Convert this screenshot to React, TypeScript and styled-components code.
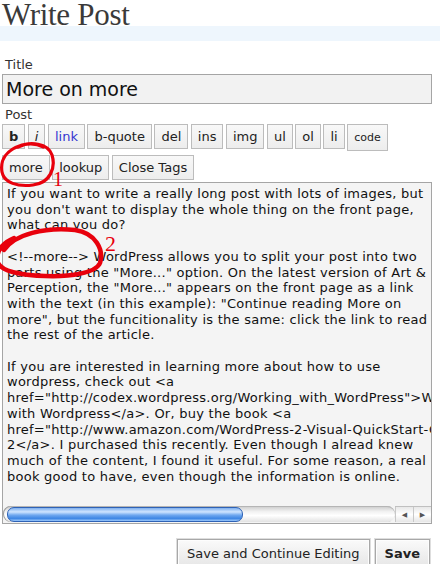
import React from "react";
import styled, { createGlobalStyle } from "styled-components";

const GlobalStyle = createGlobalStyle`
  html, body {
    margin: 0;
    padding: 0;
    background: #fff;
  }
  body {
    font-family: "DejaVu Sans", Verdana, sans-serif;
    color: #222;
  }
`;

const Page = styled.div`
  position: relative;
  width: 440px;
  height: 564px;
  overflow: hidden;
`;

const Header = styled.div`
  height: 41px;
  background: linear-gradient(to bottom, transparent 26px, #eef6fd 26px);
`;

const Heading = styled.h2`
  margin: 0;
  padding-left: 2px;
  font-family: "Liberation Serif", "Times New Roman", serif;
  font-weight: normal;
  font-size: 31px;
  line-height: 30px;
  letter-spacing: -0.3px;
  color: #3a3a3a;
`;

const Form = styled.form`
  width: 430px;
  padding: 0 8px 0 2px;
`;

type LabelProps = { $top?: number };

const Label = styled.div<LabelProps>`
  margin-top: ${(p) => p.$top ?? 0}px;
  padding-left: 3px;
  font-size: 13px;
  line-height: 16px;
  color: #333;
`;

const TitleInput = styled.input`
  display: block;
  box-sizing: border-box;
  width: 430px;
  height: 30px;
  margin-top: 1px;
  padding: 0 3px;
  border: 1px solid #a5a5a5;
  background: #f2f2f2;
  font-family: "DejaVu Sans", Verdana, sans-serif;
  font-size: 19px;
  color: #111;
  outline: none;
`;

const Toolbar = styled.div`
  display: flex;
  flex-direction: column;
  gap: 4px;
  margin-top: 1px;
`;

const ToolRow = styled.div`
  display: flex;
  align-items: baseline;
  gap: 2.5px;
`;

type Kind = "plain" | "bold" | "italic" | "link" | "code";

const TagButton = styled.button<{ $kind?: Kind }>`
  box-sizing: border-box;
  margin: 0;
  padding: ${(p) => (p.$kind === "code" ? "4px 6px" : "3px 6px")};
  border: 1px solid #bcbcbc;
  border-radius: 0;
  background: linear-gradient(to bottom, #f8f8f8, #ededed);
  font-family: "DejaVu Sans", Verdana, sans-serif;
  font-size: ${(p) => (p.$kind === "code" ? "11px" : "13px")};
  line-height: 17px;
  font-weight: ${(p) => (p.$kind === "bold" ? "bold" : "normal")};
  font-style: ${(p) => (p.$kind === "italic" ? "italic" : "normal")};
  color: ${(p) => (p.$kind === "link" ? "#3434d0" : "#222")};
`;

const Editor = styled.div`
  box-sizing: border-box;
  display: flex;
  flex-direction: column;
  width: 430px;
  height: 342px;
  margin-top: 2px;
  border: 1px solid #a5a5a5;
  background: #f4f4f4;
`;

const EditorText = styled.div`
  flex: 1;
  overflow: hidden;
  padding: 3px 0 0 4px;
  white-space: pre;
  font-size: 13px;
  letter-spacing: 0.25px;
  line-height: 15.7px;
  color: #111;
`;

const HScroll = styled.div`
  display: flex;
  height: 16px;
  margin-bottom: 1px;
`;

const Track = styled.div`
  flex: 1;
  display: flex;
  align-items: center;
  border-radius: 8px;
  background: linear-gradient(to bottom, #c9c9c9, #f2f2f2 35%, #ffffff 60%, #e2e2e2);
  box-shadow: inset 1px 0 0 #9a9a9a, inset 0 1px 0 #b5b5b5;
`;

const Thumb = styled.div`
  width: 234px;
  height: 13px;
  margin-left: 4px;
  border-radius: 7px;
  border: 1px solid #2f62b5;
  background: linear-gradient(
    to bottom,
    #7fb0ee,
    #cfe5ff 30%,
    #6ea7ef 55%,
    #3d86e4 80%,
    #9cc8fb
  );
`;

const Arrows = styled.div`
  display: flex;
  width: 36px;
  border-top: 1px solid #c0c0c0;
  background: linear-gradient(to bottom, #e8e8e8, #ffffff 50%, #e6e6e6);
`;

const Arrow = styled.div`
  flex: 1;
  display: flex;
  align-items: center;
  justify-content: center;
  font-size: 7px;
  color: #555;
  border-left: 1px solid #c8c8c8;
`;

const Actions = styled.div`
  display: flex;
  justify-content: flex-end;
  gap: 5px;
  margin-top: 15px;
  padding-right: 2px;
`;

const ActionButton = styled.button<{ $primary?: boolean }>`
  margin: 0;
  padding: 5px 9px;
  border: 1px solid #a8a8a8;
  border-radius: 0;
  box-shadow: inset 0 0 0 1px #fdfdfd, 0 0 0 1px #dedede;
  background: linear-gradient(to bottom, #fafafa, #e6e6e6);
  font-family: "DejaVu Sans", Verdana, sans-serif;
  font-size: 13px;
  line-height: 17px;
  font-weight: ${(p) => (p.$primary ? "bold" : "normal")};
  color: #222;
`;

const Markup = styled.svg`
  position: absolute;
  top: 0;
  left: 0;
  pointer-events: none;
`;

const postText = [
  "If you want to write a really long post with lots of images, but",
  "you don't want to display the whole thing on the front page,",
  "what can you do?",
  "",
  "<!--more--> WordPress allows you to split your post into two",
  'parts using the "More..." option. On the latest version of Art &',
  'Perception, the "More..." appears on the front page as a link',
  'with the text (in this example): "Continue reading More on',
  'more", but the funcitionality is the same: click the link to read',
  "the rest of the article.",
  "",
  "If you are interested in learning more about how to use",
  "wordpress, check out <a",
  'href="http://codex.wordpress.org/Working_with_WordPress">Working',
  "with Wordpress</a>. Or, buy the book <a",
  'href="http://www.amazon.com/WordPress-2-Visual-QuickStart-Guide/dp/',
  "2</a>. I purchased this recently. Even though I alread knew",
  "much of the content, I found it useful. For some reason, a real",
  "book good to have, even though the information is online.",
].join("\n");

const firstRow: { label: string; kind?: Kind }[] = [
  { label: "b", kind: "bold" },
  { label: "i", kind: "italic" },
  { label: "link", kind: "link" },
  { label: "b-quote" },
  { label: "del" },
  { label: "ins" },
  { label: "img" },
  { label: "ul" },
  { label: "ol" },
  { label: "li" },
  { label: "code", kind: "code" },
];

const secondRow = ["more", "lookup", "Close Tags"];

export default function App() {
  return (
    <Page>
      <GlobalStyle />
      <Header>
        <Heading>Write Post</Heading>
      </Header>
      <Form onSubmit={(e) => e.preventDefault()}>
        <Label $top={16}>Title</Label>
        <TitleInput value="More on more" readOnly />
        <Label $top={3}>Post</Label>
        <Toolbar>
          <ToolRow>
            {firstRow.map((b) => (
              <TagButton key={b.label} type="button" $kind={b.kind}>
                {b.label}
              </TagButton>
            ))}
          </ToolRow>
          <ToolRow>
            {secondRow.map((label) => (
              <TagButton key={label} type="button">
                {label}
              </TagButton>
            ))}
          </ToolRow>
        </Toolbar>
        <Editor>
          <EditorText>{postText}</EditorText>
          <HScroll>
            <Track>
              <Thumb />
            </Track>
            <Arrows>
              <Arrow>◀</Arrow>
              <Arrow>▶</Arrow>
            </Arrows>
          </HScroll>
        </Editor>
        <Actions>
          <ActionButton type="button">Save and Continue Editing</ActionButton>
          <ActionButton type="submit" $primary>
            Save
          </ActionButton>
        </Actions>
      </Form>
      <Markup width="440" height="564" viewBox="0 0 440 564">
        <g fill="none" stroke="#e8000c" strokeLinecap="round" strokeLinejoin="round">
          <path
            strokeWidth="3.2"
            d="M18 147 C30 141, 48 143, 52 155 C56 168, 50 183, 33 185 C18 187, 4 183, 2 172 C0 160, 6 150, 22 145 C30 143, 38 144, 43 147"
          />
          <path
            strokeWidth="4.5"
            d="M4 250 C15 234, 45 227, 75 230 C96 233, 104 250, 100 263 C96 273, 70 277, 45 276 C20 275, 2 271, -2 263 C-5 252, 2 243, 14 238"
          />
        </g>
        <g fill="#e8000c" fontFamily="'Liberation Serif', serif">
          <text x="53" y="186" fontSize="20">1</text>
          <text x="105" y="251" fontSize="22">2</text>
        </g>
      </Markup>
    </Page>
  );
}
